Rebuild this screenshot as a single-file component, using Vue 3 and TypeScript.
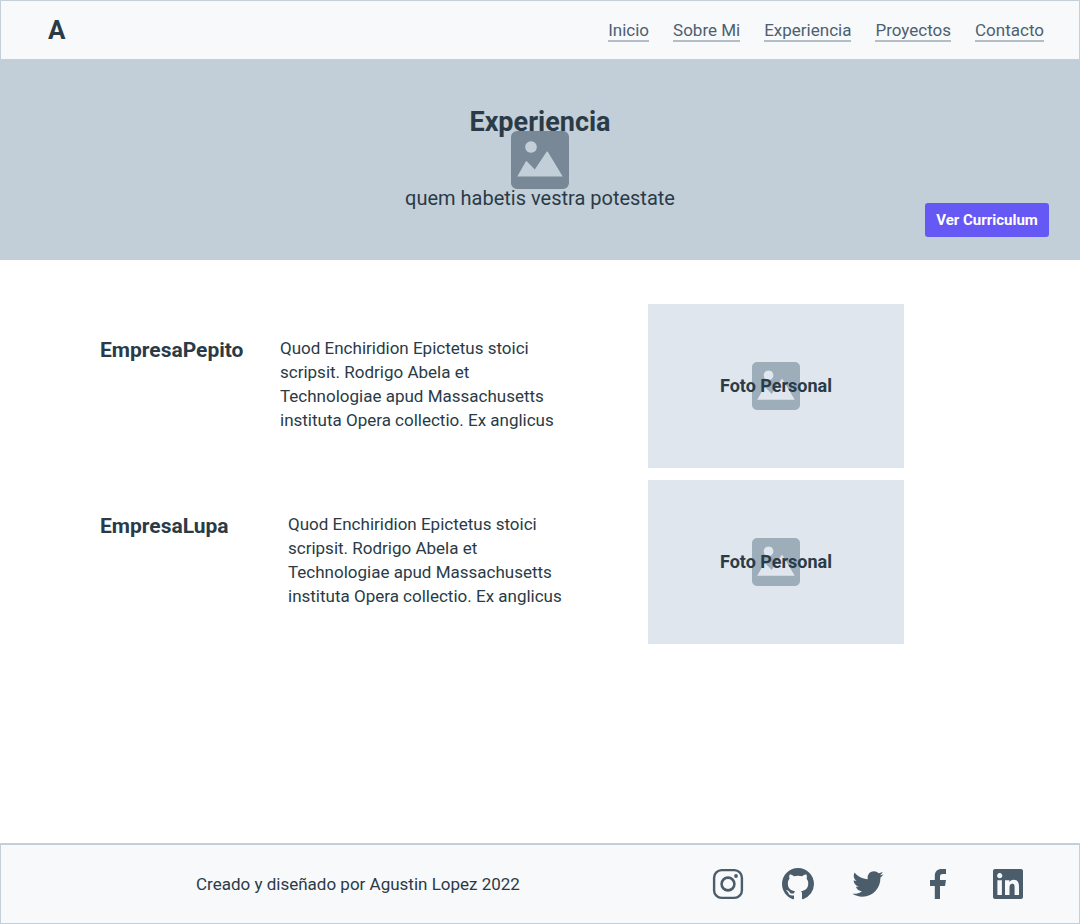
<script setup lang="ts">
interface Job {
  id: string
  company: string
  description: string
  photo: string
  wide: boolean
}

const links: string[] = ['Inicio', 'Sobre Mi', 'Experiencia', 'Proyectos', 'Contacto']

const description =
  'Quod Enchiridion Epictetus stoici scripsit. Rodrigo Abela et Technologiae apud Massachusetts instituta Opera collectio. Ex anglicus'

const jobs: Job[] = [
  { id: 'pepito', company: 'EmpresaPepito', description, photo: 'Foto Personal', wide: false },
  { id: 'lupa', company: 'EmpresaLupa', description, photo: 'Foto Personal', wide: true },
]
</script>

<template>
  <div class="page">
    <header class="header">
      <a class="logo" href="#inicio">A</a>
      <nav class="nav">
        <a v-for="link in links" :key="link" class="nav-link" href="#">{{ link }}</a>
      </nav>
    </header>

    <section class="hero">
      <svg class="hero-picture" viewBox="0 0 58 58" aria-hidden="true">
        <path
          fill-rule="evenodd"
          d="M6 0h46a6 6 0 0 1 6 6v46a6 6 0 0 1-6 6H6a6 6 0 0 1-6-6V6a6 6 0 0 1 6-6zM20 10.200a5.800 5.800 0 1 0 .01 0zM6.300 45.500h45.400L36.800 20.800Q36.200 20 35.600 20.800L23.800 38.600L16 30.400Q15.400 29.700 14.800 30.500z"
        />
      </svg>
      <h1 class="hero-title">Experiencia</h1>
      <p class="hero-subtitle">quem habetis vestra potestate</p>
      <button class="cv-button" type="button">Ver Curriculum</button>
    </section>

    <main class="jobs">
      <article v-for="job in jobs" :key="job.id" class="job" :class="{ 'job-wide': job.wide }">
        <h2 class="company">{{ job.company }}</h2>
        <p class="description">{{ job.description }}</p>
        <div class="photo">
          <svg class="photo-picture" viewBox="0 0 58 58" aria-hidden="true">
            <path
              fill-rule="evenodd"
              d="M6 0h46a6 6 0 0 1 6 6v46a6 6 0 0 1-6 6H6a6 6 0 0 1-6-6V6a6 6 0 0 1 6-6zM20 10.200a5.800 5.800 0 1 0 .01 0zM6.300 45.500h45.400L36.800 20.800Q36.200 20 35.600 20.800L23.800 38.600L16 30.400Q15.400 29.700 14.800 30.500z"
            />
          </svg>
          <span class="photo-label">{{ job.photo }}</span>
        </div>
      </article>
    </main>

    <footer class="footer">
      <p class="credit">Creado y diseñado por Agustin Lopez 2022</p>
      <div class="social">
        <a class="social-link" href="#" aria-label="Instagram">
          <svg viewBox="0 0 36 36">
            <rect x="4.100" y="4.100" width="27.800" height="27.800" rx="7.500" fill="none" stroke="currentColor" stroke-width="2.400" />
            <circle cx="18" cy="18" r="6.400" fill="none" stroke="currentColor" stroke-width="2.600" />
            <circle cx="26" cy="10" r="1.900" />
          </svg>
        </a>
        <a class="social-link" href="#" aria-label="GitHub">
          <svg viewBox="-1 -1 18 18">
            <path
              d="M8 0C3.58 0 0 3.58 0 8c0 3.54 2.29 6.53 5.47 7.59.4.07.55-.17.55-.38 0-.19-.01-.82-.01-1.49-2.01.37-2.53-.49-2.69-.94-.09-.23-.48-.94-.82-1.13-.28-.15-.68-.52-.01-.53.63-.01 1.08.58 1.23.82.72 1.21 1.87.87 2.33.66.07-.52.28-.87.51-1.07-1.78-.2-3.64-.89-3.64-3.95 0-.87.31-1.59.82-2.15-.08-.2-.36-1.02.08-2.12 0 0 .67-.21 2.2.82.64-.18 1.32-.27 2-.27s1.36.09 2 .27c1.53-1.04 2.2-.82 2.2-.82.44 1.1.16 1.92.08 2.12.51.56.82 1.27.82 2.15 0 3.07-1.87 3.75-3.65 3.95.29.25.54.73.54 1.48 0 1.07-.01 1.93-.01 2.2 0 .21.15.46.55.38A8.01 8.01 0 0 0 16 8c0-4.42-3.58-8-8-8z"
            />
          </svg>
        </a>
        <a class="social-link" href="#" aria-label="Twitter">
          <svg viewBox="-40 -40 592 592">
            <path
              d="M459.37 151.716c.325 4.548.325 9.097.325 13.645 0 138.72-105.583 298.558-298.558 298.558-59.452 0-114.68-17.219-161.137-47.106 8.447.974 16.568 1.299 25.34 1.299 49.055 0 94.213-16.568 130.274-44.832-46.132-.975-84.792-31.188-98.112-72.772 6.498.974 12.995 1.624 19.818 1.624 9.421 0 18.843-1.3 27.614-3.573-48.081-9.747-84.143-51.98-84.143-102.985v-1.299c13.969 7.797 30.214 12.67 47.431 13.319-28.264-18.843-46.781-51.005-46.781-87.391 0-19.492 5.197-37.36 14.294-52.954 51.655 63.675 129.3 105.258 216.365 109.807-1.624-7.797-2.599-15.918-2.599-24.04 0-57.828 46.782-104.934 104.934-104.934 30.213 0 57.502 12.67 76.67 33.137 23.715-4.548 46.456-13.32 66.599-25.34-7.798 24.366-24.366 44.833-46.132 57.827 21.117-2.273 41.584-8.122 60.426-16.243-14.292 20.791-32.161 39.308-52.628 54.253z"
            />
          </svg>
        </a>
        <a class="social-link" href="#" aria-label="Facebook">
          <svg viewBox="0 0 36 36">
            <path d="M26 3v5h-3c-2.400 0-3 1-3 2.800V14h6l-1 6h-5v13h-5.200V20H10v-6h4.800v-4c0-4.500 2.700-7 6.900-7z" />
          </svg>
        </a>
        <a class="social-link" href="#" aria-label="LinkedIn">
          <svg viewBox="0 0 36 36">
            <path
              fill-rule="evenodd"
              d="M5 3h26a2 2 0 0 1 2 2v26a2 2 0 0 1-2 2H5a2 2 0 0 1-2-2V5a2 2 0 0 1 2-2zM9.700 7.100a2.600 2.600 0 1 0 .01 0zM7.400 14.200V29h4.500V14.200zM15 14.200V29h4.500v-7.400c0-2 .4-3.900 2.800-3.900 2.300 0 2.300 2.200 2.300 4V29H29v-8.200c0-4-.8-7-5.400-7-2.200 0-3.600 1.200-4.200 2.400v-2z"
            />
          </svg>
        </a>
      </div>
    </footer>
  </div>
</template>

<style>
body {
  margin: 0;
}
</style>

<style scoped>
.page {
  display: flex;
  flex-direction: column;
  min-height: 100vh;
  background: #ffffff;
  color: #2a3b47;
  font-family: Roboto, "Liberation Sans", sans-serif;
  font-size: 17px;
  line-height: 24px;
}

h1,
h2,
p {
  margin: 0;
}

.header {
  display: flex;
  align-items: center;
  justify-content: space-between;
  box-sizing: border-box;
  height: 60px;
  padding: 0 35px 0 47px;
  border: 1px solid #c3cfd9;
  background: #f8f9fb;
}

.logo {
  color: #2a3b47;
  font-size: 26px;
  font-weight: 700;
  text-decoration: none;
}

.nav {
  display: flex;
  gap: 24px;
}

.nav-link {
  padding-top: 2px;
  border-bottom: 2px solid #b4bec7;
  color: #4d6070;
  line-height: 20px;
  text-decoration: none;
}

.hero {
  position: relative;
  display: flex;
  flex-direction: column;
  align-items: center;
  justify-content: center;
  gap: 48px;
  height: 200px;
  background: #c3cfd8;
  text-align: center;
}

.hero-picture {
  position: absolute;
  top: 50%;
  left: 50%;
  width: 58px;
  height: 58px;
  transform: translate(-50%, -50%);
  fill: #788896;
}

.hero-title {
  position: relative;
  font-size: 27px;
  line-height: 28px;
}

.hero-subtitle {
  position: relative;
  font-size: 20px;
  line-height: 28px;
}

.cv-button {
  position: absolute;
  right: 31px;
  bottom: 23px;
  width: 124px;
  height: 34px;
  padding: 0;
  border: 0;
  border-radius: 3px;
  background: #6558f5;
  color: #ffffff;
  font: 700 15px/20px Roboto, "Liberation Sans", sans-serif;
}

.jobs {
  display: flex;
  flex: 1;
  flex-direction: column;
  gap: 12px;
  padding: 44px 176px 44px 100px;
}

.job {
  display: grid;
  grid-template-columns: 180px 1fr 256px;
}

.job-wide {
  grid-template-columns: 188px 1fr 256px;
}

.company {
  padding-top: 34px;
  font-size: 21px;
  line-height: 24px;
}

.description {
  max-width: 288px;
  padding-top: 32px;
}

.photo {
  display: grid;
  place-items: center;
  height: 164px;
  background: #dfe6ed;
}

.photo-picture,
.photo-label {
  grid-area: 1 / 1;
}

.photo-picture {
  width: 48px;
  height: 48px;
  fill: #9eadba;
}

.photo-label {
  position: relative;
  font-size: 18px;
  font-weight: 700;
}

.footer {
  display: flex;
  align-items: center;
  justify-content: space-between;
  box-sizing: border-box;
  height: 81px;
  padding: 0 53px 0 195px;
  border: 1px solid #c3cfd9;
  border-top-width: 2px;
  background: #f8f9fb;
}

.social {
  display: flex;
  gap: 34px;
}

.social-link {
  display: flex;
  color: #4b5d6b;
}

.social-link svg {
  width: 36px;
  height: 36px;
  fill: currentColor;
}
</style>
